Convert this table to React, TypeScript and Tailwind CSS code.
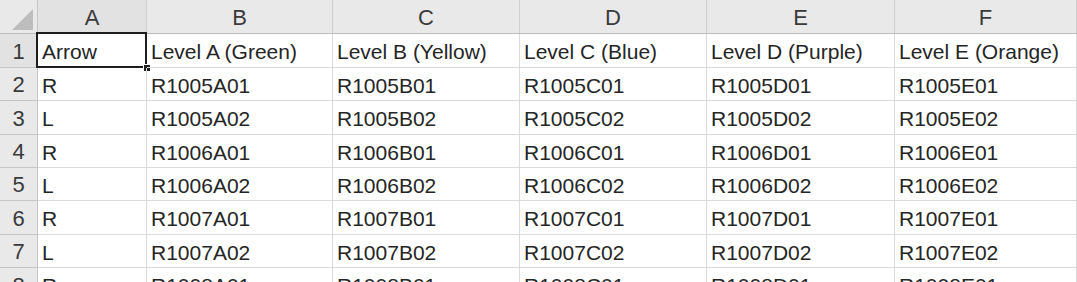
import React from "react";

const cols = [
  { key: "A", w: "w-[109px]" },
  { key: "B", w: "w-[186px]" },
  { key: "C", w: "w-[187px]" },
  { key: "D", w: "w-[187px]" },
  { key: "E", w: "w-[188px]" },
  { key: "F", w: "flex-1" },
];

const rows: { n: number; h: string; cells: string[] }[] = [
  { n: 1, h: "h-[34px]", cells: ["Arrow", "Level A (Green)", "Level B (Yellow)", "Level C (Blue)", "Level D (Purple)", "Level E (Orange)"] },
  { n: 2, h: "h-[33px]", cells: ["R", "R1005A01", "R1005B01", "R1005C01", "R1005D01", "R1005E01"] },
  { n: 3, h: "h-[34px]", cells: ["L", "R1005A02", "R1005B02", "R1005C02", "R1005D02", "R1005E02"] },
  { n: 4, h: "h-[33px]", cells: ["R", "R1006A01", "R1006B01", "R1006C01", "R1006D01", "R1006E01"] },
  { n: 5, h: "h-[33px]", cells: ["L", "R1006A02", "R1006B02", "R1006C02", "R1006D02", "R1006E02"] },
  { n: 6, h: "h-[34px]", cells: ["R", "R1007A01", "R1007B01", "R1007C01", "R1007D01", "R1007E01"] },
  { n: 7, h: "h-[33px]", cells: ["L", "R1007A02", "R1007B02", "R1007C02", "R1007D02", "R1007E02"] },
  { n: 8, h: "h-[34px]", cells: ["R", "R1008A01", "R1008B01", "R1008C01", "R1008D01", "R1008E01"] },
];

export default function App() {
  return (
    <div
      className="w-[1077px] h-[282px] overflow-hidden bg-white text-[21px] leading-none text-[#252525]"
      style={{ fontFamily: '"Liberation Sans", Arial, sans-serif' }}
    >
      {/* column header row */}
      <div className="flex h-[34px] bg-[#e9e9e9] border-b border-[#bcbcbc]">
        <div className="w-[38px] shrink-0 border-r border-[#c6c6c6] relative">
          <svg className="absolute left-0 top-0" width="38" height="33" viewBox="0 0 38 33">
            <polygon points="12,30 33,9 33,30" fill="#bdbdbd" />
          </svg>
        </div>
        {cols.map((c) => (
          <div
            key={c.key}
            className={`${c.w} shrink-0 flex items-center justify-center border-r border-[#cfcfcf] text-[#3a3a3a] text-[22px] pt-[2px] ${c.key === "A" ? "bg-[#e2e2e2]" : ""}`}
          >
            {c.key}
          </div>
        ))}
      </div>
      {rows.map((r) => (
        <div key={r.n} className={`flex ${r.h}`}>
          <div
            className={`w-[38px] shrink-0 flex items-center justify-center border-r border-b border-[#c6c6c6] text-[#3a3a3a] text-[22px] pt-[2px] ${r.n === 1 ? "bg-[#e2e2e2]" : "bg-[#e9e9e9]"}`}
          >
            {r.n}
          </div>
          {cols.map((c, i) => (
            <div
              key={c.key}
              className={`${c.w} shrink-0 relative flex items-center pl-[4px] pt-[2px] border-r border-b border-[#dadada] whitespace-nowrap`}
            >
              {r.cells[i]}
              {r.n === 1 && i === 0 && (
                <>
                  <div className="absolute left-[-2px] top-[-2px] right-[-1px] bottom-[-1px] border-2 border-[#1e1e1e]" />
                  <div className="absolute right-[-5px] bottom-[-5px] w-[8px] h-[8px] bg-[#1e1e1e] border border-white" />
                </>
              )}
            </div>
          ))}
        </div>
      ))}
    </div>
  );
}
